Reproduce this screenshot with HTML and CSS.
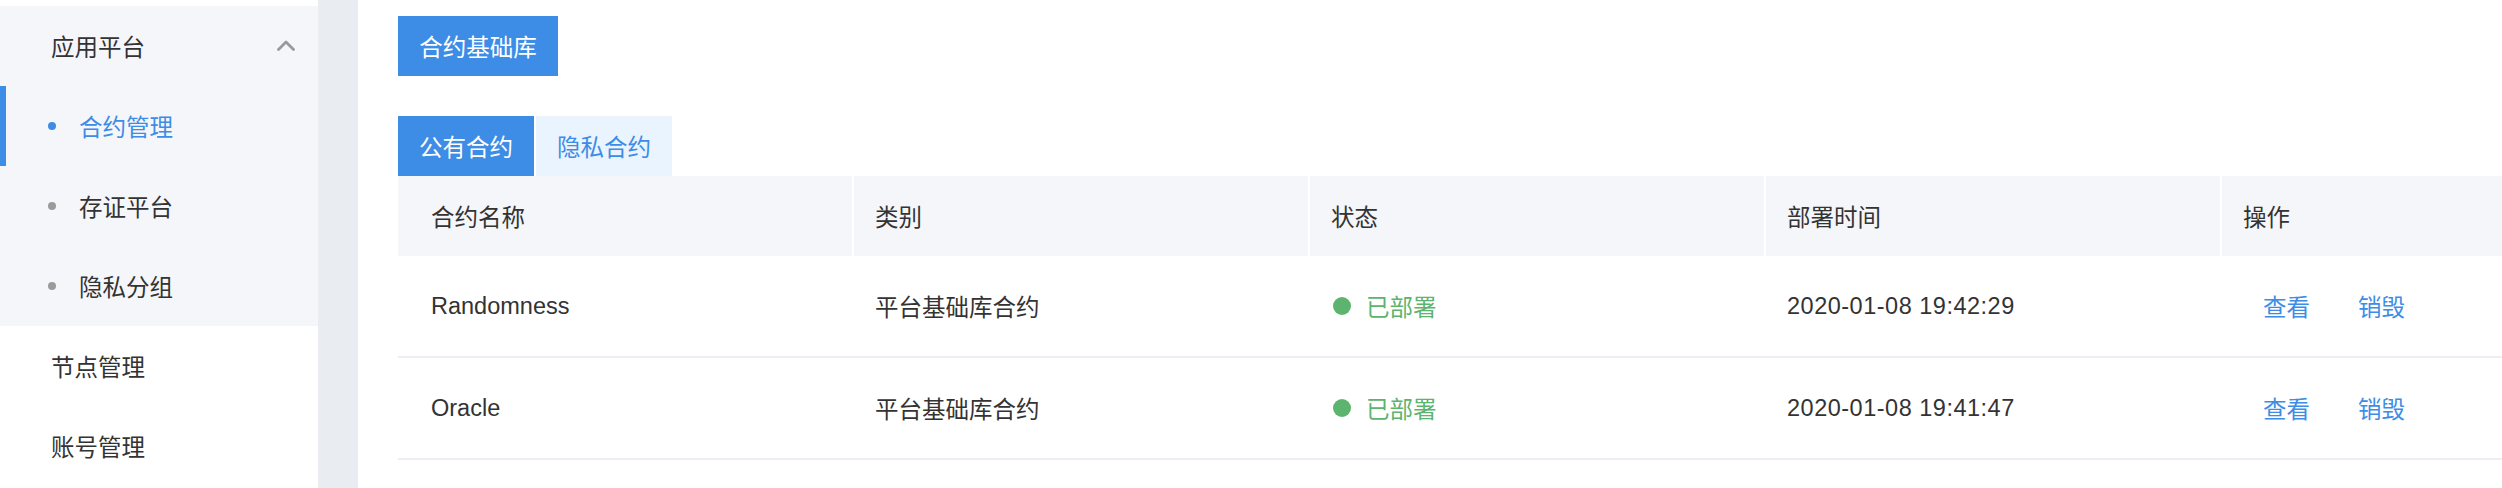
FILE: index.html
```html
<!DOCTYPE html>
<html lang="zh-CN">
<head>
<meta charset="utf-8">
<title>合约管理</title>
<link rel="stylesheet" href="styles.css">
</head>
<body>
<div class="layout">
  <aside class="sidebar">
    <div class="menu-group open">
      <div class="menu-title">
        <span>应用平台</span>
        <svg class="chevron" width="18" height="11" viewBox="0 0 18 11"><polyline points="1.5,9.5 9,2 16.5,9.5" fill="none" stroke="#999999" stroke-width="2.8" stroke-linecap="round" stroke-linejoin="round"/></svg>
      </div>
      <div class="sub-item active"><span class="dot"></span><span>合约管理</span></div>
      <div class="sub-item"><span class="dot"></span><span>存证平台</span></div>
      <div class="sub-item"><span class="dot"></span><span>隐私分组</span></div>
    </div>
    <div class="menu-item">节点管理</div>
    <div class="menu-item">账号管理</div>
  </aside>
  <div class="divider"></div>
  <main class="main">
    <div class="toolbar">
      <button class="btn-primary">合约基础库</button>
    </div>
    <div class="tabs">
      <div class="tab active">公有合约</div>
      <div class="tab">隐私合约</div>
    </div>
    <div class="table">
      <div class="row head">
        <div class="cell first">合约名称</div>
        <div class="cell">类别</div>
        <div class="cell">状态</div>
        <div class="cell">部署时间</div>
        <div class="cell">操作</div>
      </div>
      <div class="row body">
        <div class="cell first">Randomness</div>
        <div class="cell">平台基础库合约</div>
        <div class="cell"><span class="status"><span class="status-dot"></span>已部署</span></div>
        <div class="cell date">2020-01-08 19:42:29</div>
        <div class="cell actions"><a class="link">查看</a><a class="link">销毁</a></div>
      </div>
      <div class="row body">
        <div class="cell first">Oracle</div>
        <div class="cell">平台基础库合约</div>
        <div class="cell"><span class="status"><span class="status-dot"></span>已部署</span></div>
        <div class="cell date">2020-01-08 19:41:47</div>
        <div class="cell actions"><a class="link">查看</a><a class="link">销毁</a></div>
      </div>
    </div>
  </main>
</div>
</body>
</html>
```

FILE: styles.css
```css
* { box-sizing: border-box; }

html, body {
  margin: 0;
  padding: 0;
  background: #ffffff;
}

body {
  width: 2502px;
  height: 488px;
  overflow: hidden;
  font-family: "Liberation Sans", "Noto Sans CJK SC", sans-serif;
  font-size: 23.5px;
  color: #333333;
}

.layout {
  display: flex;
  width: 2502px;
  height: 488px;
  overflow: hidden;
}

/* Sidebar */
.sidebar {
  width: 318px;
  flex: 0 0 318px;
  padding-top: 6px;
  background: #ffffff;
}

.menu-group.open {
  background: #f5f6fa;
}

.menu-title {
  height: 80px;
  display: flex;
  align-items: center;
  padding-left: 51px;
  padding-right: 23px;
  color: #333333;
}

.menu-title .chevron {
  margin-left: auto;
  margin-top: -2px;
}

.sub-item {
  position: relative;
  height: 80px;
  display: flex;
  align-items: center;
  padding-left: 48px;
  color: #333333;
}

.sub-item .dot {
  width: 8px;
  height: 8px;
  border-radius: 50%;
  background: #9b9b9b;
  margin-right: 23px;
}

.sub-item.active {
  color: #3d8ce6;
}

.sub-item.active .dot {
  background: #3d8ce6;
}

.sub-item.active::before {
  content: "";
  position: absolute;
  left: 0;
  top: 0;
  width: 6px;
  height: 80px;
  background: #3d8ce6;
}

.menu-item {
  height: 80px;
  display: flex;
  align-items: center;
  padding-left: 51px;
  color: #333333;
}

.divider {
  width: 40px;
  flex: 0 0 40px;
  background: #e9ecf0;
}

/* Main */
.main {
  flex: 1;
  min-width: 0;
  overflow: hidden;
  padding: 16px 0 0 40px;
  background: #ffffff;
}

.toolbar {
  display: flex;
}

.btn-primary {
  height: 60px;
  width: 160px;
  border: none;
  border-radius: 0;
  background: #3d8ce6;
  color: #ffffff;
  font-family: inherit;
  font-size: 23.5px;
  padding: 0;
  display: flex;
  align-items: center;
  justify-content: center;
}

.tabs {
  display: flex;
  gap: 2px;
  margin-top: 40px;
}

.tab {
  width: 136px;
  height: 60px;
  display: flex;
  align-items: center;
  justify-content: center;
  background: #eaf4fe;
  color: #3d8ce6;
}

.tab.active {
  background: #3d8ce6;
  color: #ffffff;
}

/* Table */
.table {
  width: 2280px;
}

.row {
  display: grid;
  grid-template-columns: repeat(5, 456px);
}

.row.head {
  height: 80px;
  background: #f5f6fa;
}

.row.head .cell {
  border-right: 2px solid #ffffff;
}

.row.body {
  height: 102px;
  border-bottom: 2px solid #ebeef5;
}

.cell {
  display: flex;
  align-items: center;
  padding-left: 21px;
  color: #333333;
  white-space: nowrap;
}

.cell.first {
  padding-left: 33px;
}

.cell.date {
  letter-spacing: 0.5px;
}

.status {
  display: flex;
  align-items: center;
  color: #5cb46e;
}

.status-dot {
  width: 18px;
  height: 18px;
  border-radius: 50%;
  background: #5cb46e;
  margin-left: 2px;
  margin-right: 15px;
}

.actions {
  padding-left: 41px;
  gap: 48px;
}

.link {
  color: #3d8ce6;
  text-decoration: none;
  cursor: pointer;
}
```
